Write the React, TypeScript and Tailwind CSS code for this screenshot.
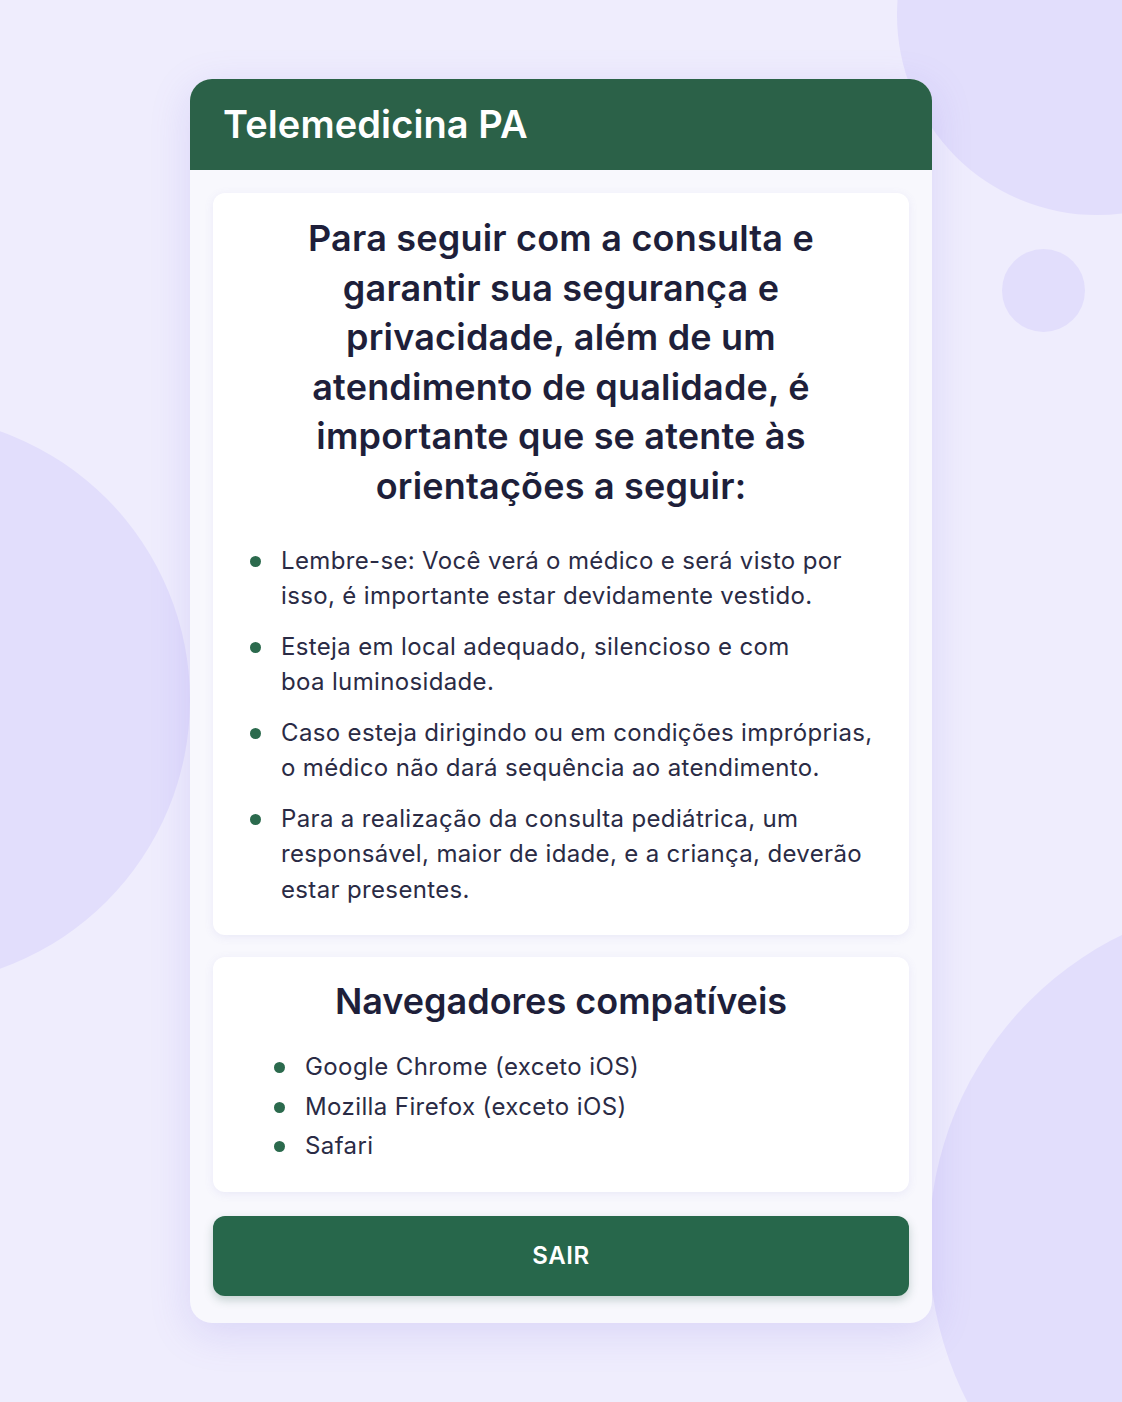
import React from "react";

const orientacoes: string[][] = [
  ["Lembre-se: Você verá o médico e será visto por", "isso, é importante estar devidamente vestido."],
  ["Esteja em local adequado, silencioso e com", "boa luminosidade."],
  ["Caso esteja dirigindo ou em condições impróprias,", "o médico não dará sequência ao atendimento."],
  [
    "Para a realização da consulta pediátrica, um",
    "responsável, maior de idade, e a criança, deverão",
    "estar presentes.",
  ],
];

const navegadores = ["Google Chrome (exceto iOS)", "Mozilla Firefox (exceto iOS)", "Safari"];

const heading = [
  "Para seguir com a consulta e",
  "garantir sua segurança e",
  "privacidade, além de um",
  "atendimento de qualidade, é",
  "importante que se atente às",
  "orientações a seguir:",
];

function Dot({ top }: { top: string }) {
  return <span className={`${top} h-[11px] w-[11px] shrink-0 rounded-full bg-[#2b6a4d]`} />;
}

export default function App() {
  return (
    <div
      className="relative min-h-[1402px] w-full overflow-hidden bg-[#efedfd]"
      style={{ fontFamily: "Inter, 'Noto Sans', sans-serif" }}
    >
      {/* background circles */}
      <div className="absolute left-[897px] top-[-185px] h-[400px] w-[400px] rounded-full bg-[#e2defc]" />
      <div className="absolute left-[1002px] top-[249px] h-[83px] w-[83px] rounded-full bg-[#e2defc]" />
      <div className="absolute left-[-380px] top-[415px] h-[570px] w-[570px] rounded-full bg-[#e2defc]" />
      <div className="absolute left-[929px] top-[900px] h-[688px] w-[688px] rounded-full bg-[#e2defc]" />

      <div className="relative mx-auto pt-[79px] w-[742px]">
        <div className="overflow-hidden rounded-[22px] bg-[#f8f8fd] shadow-[0_10px_40px_rgba(120,105,220,0.18)]">
          <header className="flex h-[91px] items-center bg-[#2b6148] px-[33px]">
            <h1 className="text-[38px] font-semibold tracking-[0.1px] text-white">Telemedicina PA</h1>
          </header>

          <div className="flex flex-col gap-[22px] px-[23px] pb-[27px] pt-[23px]">
            <section className="rounded-[12px] bg-white pl-[37px] pr-[20px] pb-[28px] pt-[21px] shadow-[0_2px_10px_rgba(110,100,200,0.10)]">
              <h2 className="pr-[17px] text-center text-[36px] font-semibold leading-[49.6px] tracking-[0.2px] text-[#1e1f3a]">
                {heading.map((l) => (
                  <span key={l} className="block">
                    {l}
                  </span>
                ))}
              </h2>
              <ul className="mt-[31px] flex flex-col gap-[15px]">
                {orientacoes.map((lines, i) => (
                  <li key={i} className="flex gap-[20px]">
                    <Dot top="mt-[13px]" />
                    <p className="whitespace-nowrap text-[24px] leading-[35.5px] tracking-[0.35px] text-[#2a2b45]">
                      {lines.map((l) => (
                        <span key={l} className="block">
                          {l}
                        </span>
                      ))}
                    </p>
                  </li>
                ))}
              </ul>
            </section>

            <section className="rounded-[12px] bg-white px-[61px] pb-[26px] pt-[22px] shadow-[0_2px_10px_rgba(110,100,200,0.10)]">
              <h2 className="text-center text-[36px] font-semibold leading-[44px] tracking-[0px] text-[#1e1f3a]">
                Navegadores compatíveis
              </h2>
              <ul className="mt-[24px] flex flex-col">
                {navegadores.map((n) => (
                  <li key={n} className="flex gap-[20px]">
                    <Dot top="mt-[15px]" />
                    <span className="text-[24px] leading-[39.5px] tracking-[0.4px] text-[#2a2b45]">{n}</span>
                  </li>
                ))}
              </ul>
            </section>

            <button className="mt-[2px] flex h-[80px] items-center justify-center rounded-[12px] bg-[#27674b] text-[24px] font-semibold tracking-[0.6px] text-white shadow-[0_4px_10px_rgba(40,90,70,0.25)]">
              SAIR
            </button>
          </div>
        </div>
      </div>
    </div>
  );
}
